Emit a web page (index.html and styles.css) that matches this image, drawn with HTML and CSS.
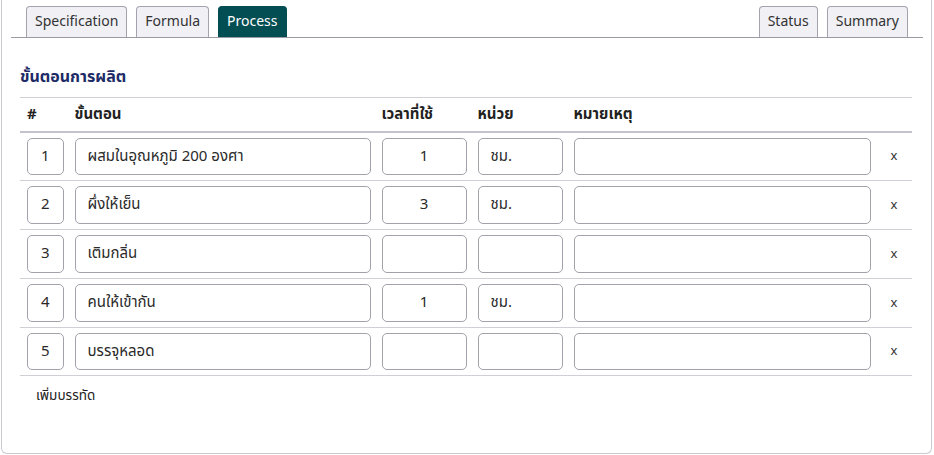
FILE: index.html
```html
<!DOCTYPE html>
<html lang="th">
<head>
<meta charset="utf-8">
<link rel="stylesheet" href="styles.css">
</head>
<body>
<div class="panel">
  <div class="tabbar">
    <div class="tabs-left">
      <div class="tab">Specification</div>
      <div class="tab">Formula</div>
      <div class="tab active">Process</div>
    </div>
    <div class="tabs-right">
      <div class="tab">Status</div>
      <div class="tab">Summary</div>
    </div>
  </div>
  <div class="content">
    <h2 class="title">ขั้นตอนการผลิต</h2>
    <table class="grid">
      <thead>
        <tr>
          <th class="c-no">#</th>
          <th class="c-step">ขั้นตอน</th>
          <th class="c-time">เวลาที่ใช้</th>
          <th class="c-unit">หน่วย</th>
          <th class="c-note">หมายเหตุ</th>
          <th class="c-del"></th>
        </tr>
      </thead>
      <tbody>
        <tr>
          <td class="c-no"><div class="field num">1</div></td>
          <td class="c-step"><div class="field">ผสมในอุณหภูมิ 200 องศา</div></td>
          <td class="c-time"><div class="field num">1</div></td>
          <td class="c-unit"><div class="field">ชม.</div></td>
          <td class="c-note"><div class="field"></div></td>
          <td class="c-del">x</td>
        </tr>
        <tr>
          <td class="c-no"><div class="field num">2</div></td>
          <td class="c-step"><div class="field">ผึ่งให้เย็น</div></td>
          <td class="c-time"><div class="field num">3</div></td>
          <td class="c-unit"><div class="field">ชม.</div></td>
          <td class="c-note"><div class="field"></div></td>
          <td class="c-del">x</td>
        </tr>
        <tr>
          <td class="c-no"><div class="field num">3</div></td>
          <td class="c-step"><div class="field">เติมกลิ่น</div></td>
          <td class="c-time"><div class="field num"></div></td>
          <td class="c-unit"><div class="field"></div></td>
          <td class="c-note"><div class="field"></div></td>
          <td class="c-del">x</td>
        </tr>
        <tr>
          <td class="c-no"><div class="field num">4</div></td>
          <td class="c-step"><div class="field">คนให้เข้ากัน</div></td>
          <td class="c-time"><div class="field num">1</div></td>
          <td class="c-unit"><div class="field">ชม.</div></td>
          <td class="c-note"><div class="field"></div></td>
          <td class="c-del">x</td>
        </tr>
        <tr>
          <td class="c-no"><div class="field num">5</div></td>
          <td class="c-step"><div class="field">บรรจุหลอด</div></td>
          <td class="c-time"><div class="field num"></div></td>
          <td class="c-unit"><div class="field"></div></td>
          <td class="c-note"><div class="field"></div></td>
          <td class="c-del">x</td>
        </tr>
      </tbody>
    </table>
    <div class="add">เพิ่มบรรทัด</div>
  </div>
</div>
</body>
</html>
```
FILE: styles.css
```css
* { box-sizing: border-box; }
html, body { margin: 0; padding: 0; background: #fff; }
body {
  font-family: "Noto Sans Thai", "Noto Sans", "DejaVu Sans", sans-serif;
  color: #222;
  font-size: 15px;
}
.panel {
  margin-left: 1px;
  width: 931px;
  height: 454px;
  border: 1px solid #c9c9d2;
  border-top: none;
  border-radius: 0 0 6px 6px;
  padding: 6px 8px 0 9px;
}
.tabbar {
  display: flex;
  justify-content: space-between;
  border-bottom: 1px solid #9a9aa4;
  padding: 0 15px 0 15px;
}
.tabs-left, .tabs-right { display: flex; gap: 9px; }
.tab {
  height: 31px;
  padding: 0 8px;
  border: 1px solid #a3a3ae;
  border-bottom: none;
  border-radius: 4px 4px 0 0;
  background: #f0f0f5;
  color: #333;
  font-size: 14px;
  line-height: 29px;
}
.tab.active {
  background: #034e53;
  border-color: #034e53;
  color: #fff;
}
.content { padding: 0 11px 0 9px; }
.title {
  margin: 27px 0 0 0;
  font-size: 16px;
  font-weight: 700;
  color: #1c2a66;
  height: 32px;
  line-height: 24px;
}
.grid {
  width: 892px;
  border-collapse: collapse;
  border-top: 1px solid #cfcfd6;
}
.grid th {
  text-align: left;
  font-weight: 700;
  font-size: 15px;
  height: 34px;
  padding: 0 5.5px;
  border-bottom: 2px solid #c3c3cc;
  color: #222;
}
.grid td {
  padding: 5px 5.5px;
  border-bottom: 1px solid #cfcfd6;
  height: 48.75px;
}
.grid th.c-no, .grid td.c-no { padding-left: 7px; width: 49px; }
.c-step { width: 307px; }
.c-time { width: 96px; }
.c-unit { width: 96px; }
.c-note { width: 308px; }
.grid td.c-del {
  text-align: center;
  font-size: 13px;
  color: #333;
  padding: 0;
}
.field {
  height: 37.75px;
  border: 1px solid #a2a2ac;
  border-radius: 5px;
  padding: 0 12px;
  line-height: 36px;
  font-size: 15px;
  color: #2a2a2a;
  white-space: nowrap;
  overflow: hidden;
}
.field.num { text-align: center; padding: 0; }
.add {
  margin: 10px 0 0 16px;
  font-size: 13.5px;
  color: #222;
}
```
